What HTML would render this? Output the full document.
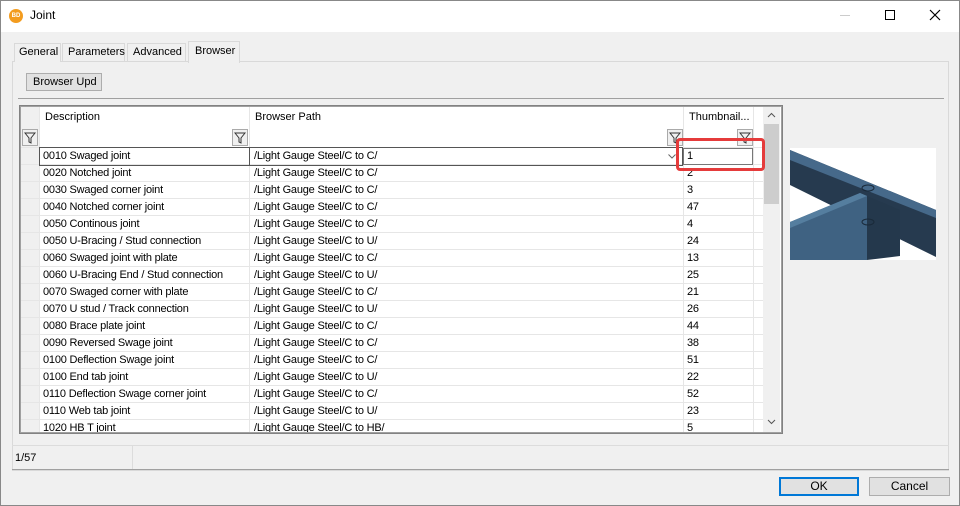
<!DOCTYPE html>
<html><head><style>
*{box-sizing:border-box;margin:0;padding:0}
body{width:960px;height:506px;overflow:hidden;background:#f0f0f0;font-family:"Liberation Sans",sans-serif;font-size:11px;color:#000;position:relative}
.a{position:absolute;white-space:nowrap}
.row{position:absolute;left:21px;width:742px;height:17px;border-bottom:1px solid #e6e6e6}
.row span{position:absolute;top:2px;white-space:nowrap;letter-spacing:-0.2px}
.vl{position:absolute;top:107px;height:325px;width:1px;background:#e6e6e6}
.flt{position:absolute;width:16px;height:17px;border:1px solid #aaa;background:#f0f0f0}
</style></head><body>
<div class="a" style="left:0;top:0;width:960px;height:506px;border:1px solid #888"></div>
<div class="a" style="left:1px;top:1px;width:958px;height:31px;background:#fff"></div>
<div class="a" style="left:9px;top:9px;width:14px;height:14px;border-radius:50%;background:#f39c1f;color:#fff;font-size:6px;font-weight:bold;text-align:center;line-height:14px">BD</div>
<div class="a" style="left:30px;top:8px;font-size:12px">Joint</div>
<div class="a" style="left:840px;top:15px;width:10px;height:1px;background:#ccc"></div>
<div class="a" style="left:885px;top:10px;width:10px;height:10px;border:1px solid #000"></div>
<svg class="a" style="left:929px;top:9px" width="12" height="12"><path d="M1 1L11 11M11 1L1 11" stroke="#000" stroke-width="1.2"/></svg>

<!-- tabs -->
<div class="a" style="left:12px;top:61px;width:937px;height:410px;border:1px solid #d9d9d9;background:#f0f0f0"></div>
<div class="a" style="left:14px;top:43px;width:47px;height:19px;border:1px solid #d9d9d9;border-bottom:none;padding:2px 4px;background:#f0f0f0">General</div>
<div class="a" style="left:62px;top:43px;width:63px;height:19px;border:1px solid #d9d9d9;border-bottom:none;padding:2px 5px">Parameters</div>
<div class="a" style="left:127px;top:43px;width:59px;height:19px;border:1px solid #d9d9d9;border-bottom:none;padding:2px 5px">Advanced</div>
<div class="a" style="left:188px;top:41px;width:52px;height:22px;border:1px solid #d9d9d9;border-bottom:none;padding:3px 6px;background:#f0f0f0">Browser</div>

<div class="a" style="left:26px;top:73px;width:76px;height:18px;border:1px solid #adadad;background:#e1e1e1;padding:2px 6px">Browser Upd</div>
<div class="a" style="left:18px;top:98px;width:926px;height:1px;background:#a0a0a0"></div>

<!-- grid -->
<div class="a" style="left:19px;top:105px;width:764px;height:329px;border:1px solid #828282;background:#fff"></div>
<div class="a" style="left:20px;top:106px;width:762px;height:327px;border:1px solid #a0a0a0"></div>
<div class="a" style="left:21px;top:107px;width:18px;height:325px;background:#f0f0f0"></div>
<div class="a" style="left:763px;top:107px;width:17px;height:325px;background:#f0f0f0"></div>
<div class="a" style="left:764px;top:124px;width:15px;height:80px;background:#cdcdcd"></div>
<svg class="a" style="left:767px;top:112px" width="9" height="6"><path d="M1 5L4.5 1.5L8 5" stroke="#555" fill="none"/></svg>
<svg class="a" style="left:767px;top:419px" width="9" height="6"><path d="M1 1L4.5 4.5L8 1" stroke="#555" fill="none"/></svg>
<div class="vl" style="left:39px"></div><div class="vl" style="left:249px"></div><div class="vl" style="left:683px"></div><div class="vl" style="left:753px"></div>
<div class="a" style="left:21px;top:147px;width:742px;height:1px;background:#e6e6e6"></div>
<div class="a" style="left:45px;top:111px">Description</div>
<div class="a" style="left:255px;top:111px">Browser Path</div>
<div class="a" style="left:689px;top:111px">Thumbnail...</div>
<div class="flt" style="left:22px;top:129px"></div>
<div class="flt" style="left:232px;top:129px"></div>
<div class="flt" style="left:667px;top:129px"></div>
<div class="flt" style="left:737px;top:129px"></div>
<svg class="a" style="left:24px;top:132px" width="12" height="12"><path d="M1 1H11L7 6V11L5 10V6Z" fill="none" stroke="#333"/></svg>
<svg class="a" style="left:234px;top:132px" width="12" height="12"><path d="M1 1H11L7 6V11L5 10V6Z" fill="none" stroke="#333"/></svg>
<svg class="a" style="left:669px;top:132px" width="12" height="12"><path d="M1 1H11L7 6V11L5 10V6Z" fill="none" stroke="#333"/></svg>
<svg class="a" style="left:739px;top:132px" width="12" height="12"><path d="M1 1H11L7 6V11L5 10V6Z" fill="none" stroke="#333"/></svg>

<div class="row" style="top:148px"><span style="left:22px">0010 Swaged joint</span><span style="left:233px">/Light Gauge Steel/C to C/</span><span style="left:666px">1</span></div>
<div class="a" style="left:39px;top:147px;width:211px;height:19px;border:1px solid #555"></div>
<div class="a" style="left:249px;top:147px;width:434px;height:19px;border:1px solid #555"></div>
<svg class="a" style="left:668px;top:154px" width="8" height="5"><path d="M0.5 0.5L4 4L7.5 0.5" stroke="#666" fill="none"/></svg>
<div class="a" style="left:683px;top:148px;width:70px;height:17px;border:1px solid #777"></div>
<div class="row" style="top:165px"><span style="left:22px">0020 Notched joint</span><span style="left:233px">/Light Gauge Steel/C to C/</span><span style="left:666px">2</span></div>
<div class="row" style="top:182px"><span style="left:22px">0030 Swaged corner joint</span><span style="left:233px">/Light Gauge Steel/C to C/</span><span style="left:666px">3</span></div>
<div class="row" style="top:199px"><span style="left:22px">0040 Notched corner joint</span><span style="left:233px">/Light Gauge Steel/C to C/</span><span style="left:666px">47</span></div>
<div class="row" style="top:216px"><span style="left:22px">0050 Continous joint</span><span style="left:233px">/Light Gauge Steel/C to C/</span><span style="left:666px">4</span></div>
<div class="row" style="top:233px"><span style="left:22px">0050 U-Bracing / Stud connection</span><span style="left:233px">/Light Gauge Steel/C to U/</span><span style="left:666px">24</span></div>
<div class="row" style="top:250px"><span style="left:22px">0060 Swaged joint with plate</span><span style="left:233px">/Light Gauge Steel/C to C/</span><span style="left:666px">13</span></div>
<div class="row" style="top:267px"><span style="left:22px">0060 U-Bracing End / Stud connection</span><span style="left:233px">/Light Gauge Steel/C to U/</span><span style="left:666px">25</span></div>
<div class="row" style="top:284px"><span style="left:22px">0070 Swaged corner with plate</span><span style="left:233px">/Light Gauge Steel/C to C/</span><span style="left:666px">21</span></div>
<div class="row" style="top:301px"><span style="left:22px">0070 U stud / Track connection</span><span style="left:233px">/Light Gauge Steel/C to U/</span><span style="left:666px">26</span></div>
<div class="row" style="top:318px"><span style="left:22px">0080 Brace plate joint</span><span style="left:233px">/Light Gauge Steel/C to C/</span><span style="left:666px">44</span></div>
<div class="row" style="top:335px"><span style="left:22px">0090 Reversed Swage joint</span><span style="left:233px">/Light Gauge Steel/C to C/</span><span style="left:666px">38</span></div>
<div class="row" style="top:352px"><span style="left:22px">0100 Deflection Swage joint</span><span style="left:233px">/Light Gauge Steel/C to C/</span><span style="left:666px">51</span></div>
<div class="row" style="top:369px"><span style="left:22px">0100 End tab joint</span><span style="left:233px">/Light Gauge Steel/C to U/</span><span style="left:666px">22</span></div>
<div class="row" style="top:386px"><span style="left:22px">0110 Deflection Swage corner joint</span><span style="left:233px">/Light Gauge Steel/C to C/</span><span style="left:666px">52</span></div>
<div class="row" style="top:403px"><span style="left:22px">0110 Web tab joint</span><span style="left:233px">/Light Gauge Steel/C to U/</span><span style="left:666px">23</span></div>
<div class="row" style="top:420px;height:12px;overflow:hidden;border:none"><span style="left:22px">1020 HB T joint</span><span style="left:233px">/Light Gauge Steel/C to HB/</span><span style="left:666px">5</span></div>

<div class="a" style="left:676px;top:138px;width:89px;height:33px;border:3px solid #e53b3b;border-radius:4px"></div>

<!-- image -->
<svg class="a" style="left:790px;top:148px" width="146" height="112" viewBox="0 0 146 112">
<rect width="146" height="112" fill="#fff"/>
<polygon points="0,2 146,62 146,109 0,37" fill="#263a4f"/>
<polygon points="0,2 146,62 146,70 0,12" fill="#46698a"/>
<polygon points="0,74 70,45 77,48 77,112 0,112" fill="#3f6282"/>
<polygon points="0,74 70,45 77,48 0,80" fill="#557e9f"/>
<polygon points="77,48 110,62 110,108 77,112" fill="#24384c"/>
<ellipse cx="78" cy="40" rx="6" ry="3" fill="none" stroke="#1a2a3a"/>
<ellipse cx="78" cy="74" rx="6" ry="3" fill="none" stroke="#1a2a3a"/>
</svg>

<!-- status -->
<div class="a" style="left:12px;top:445px;width:937px;height:1px;background:#dcdcdc"></div>
<div class="a" style="left:132px;top:446px;width:1px;height:23px;background:#dcdcdc"></div>
<div class="a" style="left:15px;top:452px">1/57</div>
<div class="a" style="left:12px;top:469px;width:937px;height:1px;background:#a0a0a0"></div>

<div class="a" style="left:779px;top:477px;width:80px;height:19px;border:2px solid #0078d7;background:#e1e1e1;text-align:center;line-height:15px;font-size:12px">OK</div>
<div class="a" style="left:869px;top:477px;width:81px;height:19px;border:1px solid #adadad;background:#e1e1e1;text-align:center;line-height:17px;font-size:12px">Cancel</div>
</body></html>
